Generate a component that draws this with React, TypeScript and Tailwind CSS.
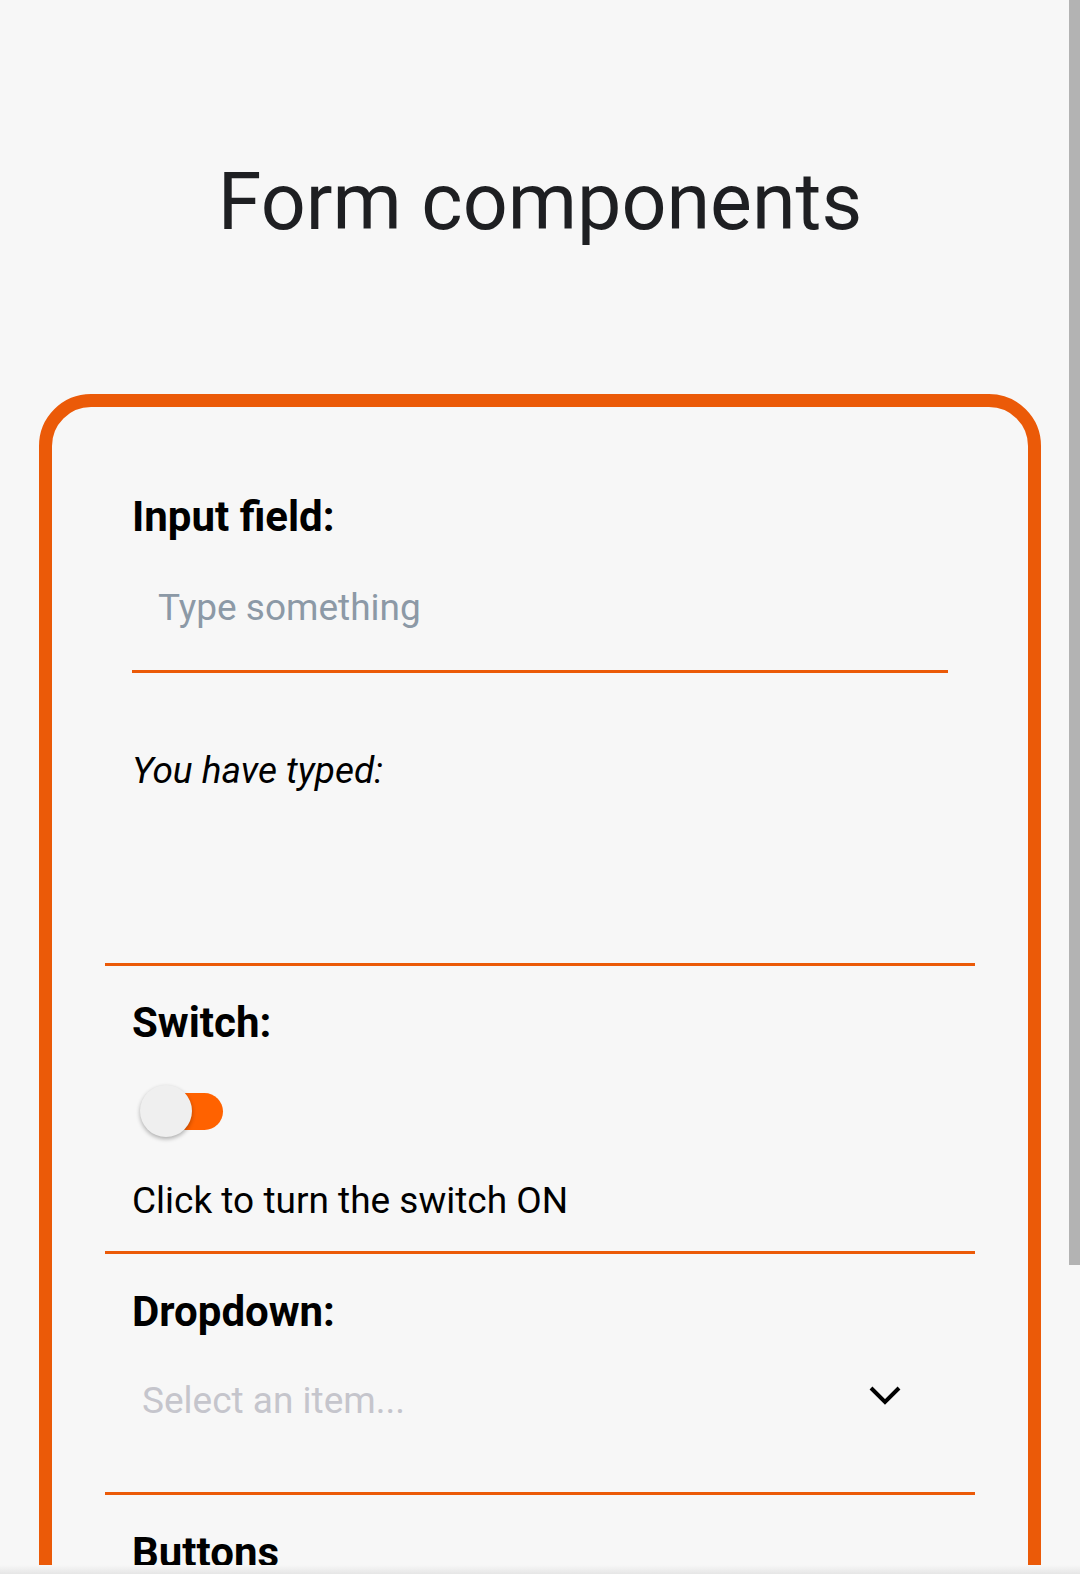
const font = { fontFamily: "Roboto, 'Noto Sans', sans-serif" };

function Divider() {
  return <div className="h-[3px] bg-[#eb5a08]" />;
}

function Label({ children }: { children: string }) {
  return (
    <p className="text-[42px] font-bold leading-[48px] text-black">{children}</p>
  );
}

export default function App() {
  return (
    <div
      className="relative h-[1574px] overflow-hidden bg-[#f7f7f7]"
      style={font}
    >
      <h1 className="pt-[154px] text-center text-[79px] font-normal leading-[96px] text-[#1e1f22]">
        Form components
      </h1>

      <main className="mx-[39px] mt-[144px] rounded-[52px] border-[13px] border-[#eb5a08] px-[53px] pb-20">
        {/* input field */}
        <section className="px-[27px] pt-[86px]">
          <Label>Input field:</Label>
          <div className="flex h-[132px] items-center border-b-[3px] border-[#eb5a08] pl-[26px]">
            <span className="mt-[4px] text-[37px] leading-[46px] text-[#8c99a6]">
              Type something
            </span>
          </div>
          <p className="mt-[75px] text-[37px] italic leading-[46px] text-black">
            You have typed:
          </p>
          <div className="h-[169px]" />
        </section>
        <Divider />

        {/* switch */}
        <section className="px-[27px] pt-[33px]">
          <Label>Switch:</Label>
          <div className="relative mt-[38px] h-[52px] w-[100px]">
            <div className="absolute left-[16px] top-[8px] h-[37px] w-[75px] rounded-full bg-[#ff6200]" />
            <div className="absolute left-[8px] top-0 h-[52px] w-[52px] rounded-full bg-[#efefef] shadow-[0_2px_4px_rgba(0,0,0,0.3)]" />
          </div>
          <p className="mt-[42px] pb-[28px] text-[37px] leading-[44px] text-black">
            Click to turn the switch ON
          </p>
        </section>
        <Divider />

        {/* dropdown */}
        <section className="px-[27px] pt-[34px]">
          <Label>Dropdown:</Label>
          <div className="flex h-[124px] items-center justify-between pl-[10px] pr-[47px]">
            <span className="mt-[6px] text-[37px] leading-[44px] text-[#c5c5cc]">
              Select an item...
            </span>
            <svg
              width="32"
              height="20"
              viewBox="0 0 32 20"
              fill="none"
              stroke="#000"
              strokeWidth="4"
              className="-mt-[6px]"
            >
              <polyline points="2,3 16,17 30,3" />
            </svg>
          </div>
          <div className="h-[32px]" />
        </section>
        <Divider />

        {/* buttons */}
        <section className="px-[27px] pt-[34px]">
          <Label>Buttons</Label>
        </section>
      </main>

      <div className="absolute right-0 top-0 h-[1265px] w-[11px] bg-[#b3b3b3]" />
      <div className="absolute bottom-0 left-0 h-[9px] w-full bg-gradient-to-b from-[#f7f7f7] to-[#e6e6e6]" />
    </div>
  );
}
